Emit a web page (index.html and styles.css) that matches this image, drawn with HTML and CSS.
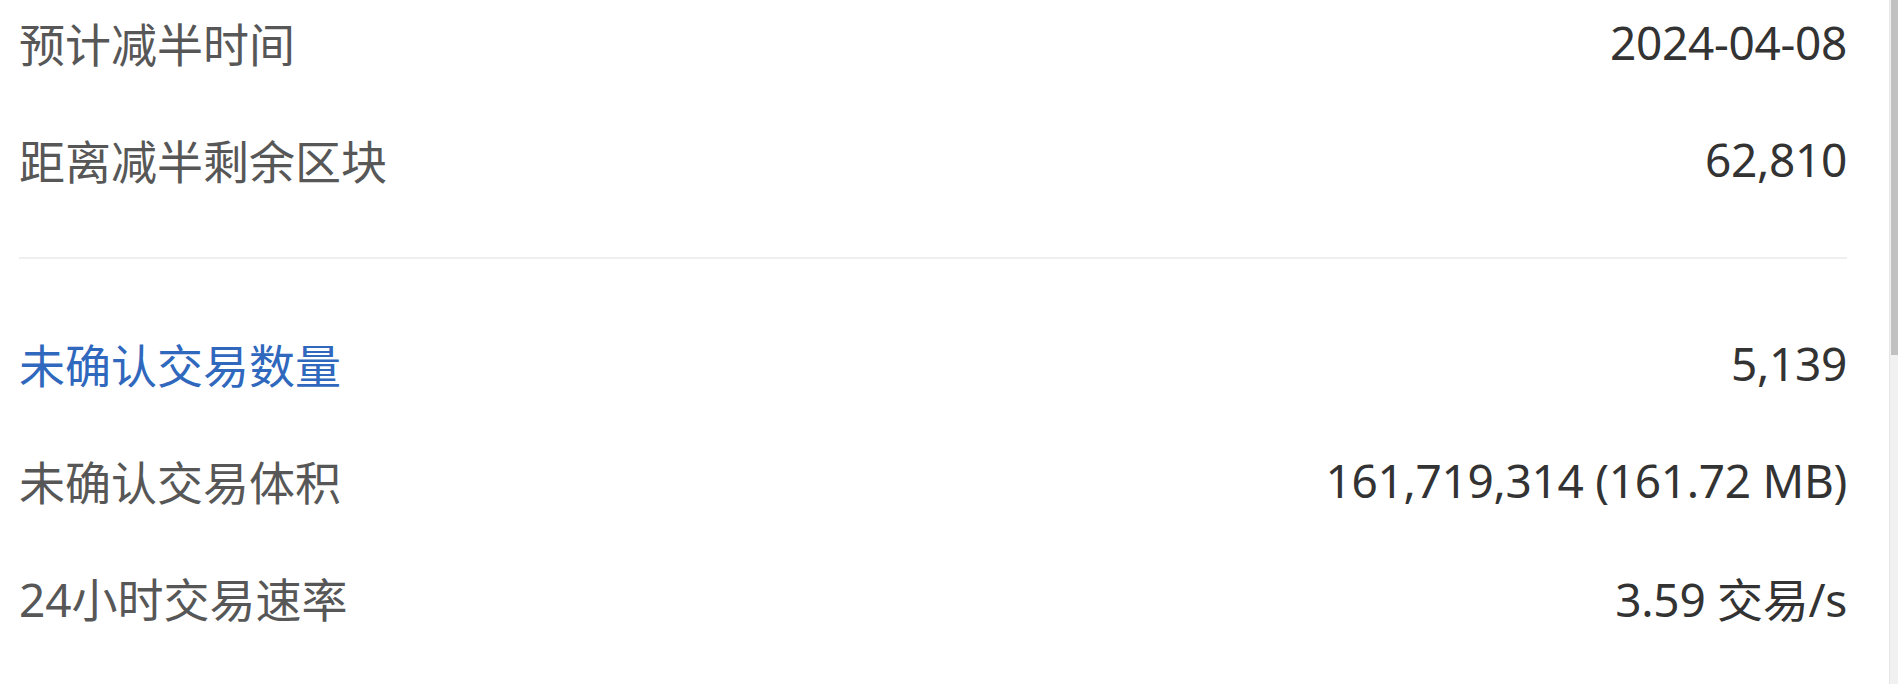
FILE: index.html
```html
<html>

<head>

    <meta name="viewport" content="width=device-width, initial-scale=1.0">

    <title>网络状态</title>

    <link rel="stylesheet" href="styles.css">

</head>

<body>

    <div class="page">

        <div class="stats">

            <div class="group">
                <div class="row">
                    <span class="label">预计减半时间</span>
                    <span class="value">2024-04-08</span>
                </div>
                <div class="row">
                    <span class="label">距离减半剩余区块</span>
                    <span class="value">62,810</span>
                </div>
            </div>

            <div class="divider"></div>

            <div class="group">
                <div class="row">
                    <span class="label link">未确认交易数量</span>
                    <span class="value">5,139</span>
                </div>
                <div class="row">
                    <span class="label">未确认交易体积</span>
                    <span class="value">161,719,314 (161.72 MB)</span>
                </div>
                <div class="row">
                    <span class="label">24小时交易速率</span>
                    <span class="value">3.59 交易/s</span>
                </div>
            </div>

        </div>

        <div class="scrollbar">
            <div class="thumb"></div>
        </div>

    </div>

</body>

</html>
```

FILE: styles.css
```css
body {
    font-family: "Noto Sans", "Noto Sans CJK SC", sans-serif;
    background-color: #ffffff;
    color: #333;
    margin: 0;
    padding: 0;
    overflow: hidden;
}

.page {
    display: flex;
    height: 684px;
}

.stats {
    flex: 1;
    padding: 0 42px 0 19px;
    margin-top: -17px;
    font-size: 46px;
}

.row {
    display: flex;
    justify-content: space-between;
    align-items: center;
    height: 117px;
}

.label {
    color: #575757;
}

.label.link {
    color: #2f68bd;
}

.value {
    color: #333;
    letter-spacing: -0.3px;
}

.divider {
    height: 2px;
    background-color: #efefef;
    margin: 40px 0 45px 0;
}

.scrollbar {
    width: 8px;
    background-color: #f1f1f1;
    border-left: 1px solid #e6e6e6;
}

.thumb {
    height: 355px;
    margin-left: 1px;
    background-color: #c1c1c1;
}
```
